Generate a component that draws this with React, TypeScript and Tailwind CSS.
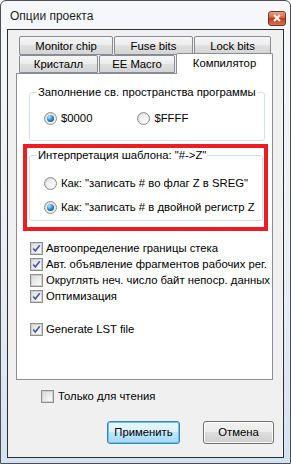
import React from "react";

function Radio({ checked }: { checked?: boolean }) {
  return (
    <span className="w-[13px] h-[13px] rounded-full border border-[#8e8f8f] bg-[linear-gradient(135deg,#cfcfcf,#f8f8f8)] flex items-center justify-center shrink-0">
      <span className="w-[9px] h-[9px] rounded-full bg-[linear-gradient(135deg,#e4e4e4,#ffffff)] flex items-center justify-center">
        {checked && (
          <span className="w-[7px] h-[7px] rounded-full bg-[radial-gradient(circle_at_35%_30%,#b8ecff,#1e7cc2_55%,#0a3f78)]" />
        )}
      </span>
    </span>
  );
}

function Check({ checked }: { checked?: boolean }) {
  return (
    <span className="w-[13px] h-[13px] border border-[#8e8f8f] bg-white flex items-center justify-center shrink-0">
      <span className="w-[11px] h-[11px] border border-[#d0d0d0] bg-[linear-gradient(135deg,#dcdcdc,#fbfbfb)] flex items-center justify-center">
        {checked && (
          <svg width="11" height="11" viewBox="0 0 11 11">
            <path d="M1.5 5.5 L4 8.5 L9.5 1.5" fill="none" stroke="#3d5a9c" strokeWidth="1.9" />
          </svg>
        )}
      </span>
    </span>
  );
}

function Tab({ label, w }: { label: string; w: string }) {
  return (
    <div
      className={`${w} h-full border border-[#898c95] rounded-t-[2px] bg-[linear-gradient(#f6f6f6,#ececec_50%,#e0e0e0_50%,#d4d4d4)] flex items-center justify-center pt-[1px]`}
    >
      {label}
    </div>
  );
}

export default function App() {
  return (
    <div
      className="w-[291px] h-[464px] border border-[#4e4e4e] rounded-t-[6px] bg-[linear-gradient(#f6f8fb,#e8eef6_60%,#d3e2f3)] flex flex-col text-black"
      style={{ fontFamily: '"Liberation Sans", Arial, sans-serif' }}
    >
      {/* title bar */}
      <div className="h-[28px] flex items-center justify-between pl-[9px] pr-[4px] pt-[2px]">
        <span className="text-[12px] text-[#1e1e1e]">Опции проекта</span>
        <div className="w-[18px] h-[15px] mt-[4px] rounded-[3px] border border-[#7b3424] bg-[linear-gradient(#e9a08a,#d3583a_50%,#c0381b_50%,#d8704e)] flex items-center justify-center">
          <svg width="8" height="8" viewBox="0 0 8 8">
            <path d="M1 1 L7 7 M7 1 L1 7" stroke="#ffffff" strokeWidth="2" />
          </svg>
        </div>
      </div>

      {/* client area */}
      <div className="mx-[6px] mb-[5px] flex-1 border border-[#2e2e2e] bg-[#f0f0f0] flex flex-col text-[11.3px] leading-[13px]">
        {/* tabs */}
        <div className="mt-[6px] ml-[8px] w-[257px] flex flex-col">
          <div className="h-[19px] pl-[3px] flex gap-[1px]">
            <Tab label="Monitor chip" w="w-[94px]" />
            <Tab label="Fuse bits" w="w-[79px]" />
            <Tab label="Lock bits" w="w-[77px]" />
          </div>
          <div className="h-[18px] pl-[3px] flex items-end gap-[1px]">
            <Tab label="Кристалл" w="w-[79px]" />
            <Tab label="EE Macro" w="w-[76px]" />
            <div className="w-[97px] h-[21px] -mb-px relative z-10 border border-b-0 border-[#898c95] rounded-t-[2px] bg-white flex justify-center pt-[3px]">
              Компилятор
            </div>
          </div>

          {/* tab page */}
          <div className="h-[307px] border border-[#898c95] bg-white flex flex-col">
            <fieldset className="mt-[12px] ml-[12px] w-[232px] h-[55px] border border-[#d5dfe5] rounded-[3px] px-[7px]">
              <legend className="px-[1px] whitespace-nowrap">Заполнение св. пространства программы</legend>
              <div className="flex items-center mt-[13px] ml-[7px]">
                <Radio checked />
                <span className="ml-[4px]">$0000</span>
                <span className="ml-[45px]">
                  <Radio />
                </span>
                <span className="ml-[4px]">$FFFF</span>
              </div>
            </fieldset>

            {/* highlighted group */}
            <div className="mt-[3px] ml-[6px] w-[245px] h-[87px] border-[4px] border-[#ee1c25] pt-[1px] pl-[2px]">
              <fieldset className="w-[232px] h-[72px] border border-[#d5dfe5] rounded-[3px] px-[7px]">
                <legend className="px-[1px] whitespace-nowrap">Интерпретация шаблона: "#-&gt;Z"</legend>
                <div className="flex flex-col gap-[11px] mt-[15px] ml-[7px]">
                  <div className="flex items-center">
                    <Radio />
                    <span className="ml-[4px] whitespace-nowrap">Как: "записать # во флаг Z в SREG"</span>
                  </div>
                  <div className="flex items-center">
                    <Radio checked />
                    <span className="ml-[4px] whitespace-nowrap">Как: "записать # в двойной регистр Z</span>
                  </div>
                </div>
              </fieldset>
            </div>

            {/* checkboxes */}
            <div className="mt-[11px] ml-[13px] flex flex-col gap-[3px]">
              {[
                ["Автоопределение границы стека", true],
                ["Авт. объявление фрагментов рабочих рег.", true],
                ["Округлять неч. число байт непоср. данных", false],
                ["Оптимизация", true],
              ].map(([label, c]) => (
                <div key={label as string} className="h-[13px] flex items-center">
                  <Check checked={c as boolean} />
                  <span className="ml-[3px] whitespace-nowrap">{label as string}</span>
                </div>
              ))}
              <div className="h-[13px] mt-[17px] flex items-center">
                <Check checked />
                <span className="ml-[3px]">Generate LST file</span>
              </div>
            </div>
          </div>
        </div>

        {/* read only */}
        <div className="mt-[10px] ml-[33px] h-[13px] flex items-center">
          <Check />
          <span className="ml-[4px]">Только для чтения</span>
        </div>

        {/* buttons */}
        <div className="mt-[18px] mr-[9px] flex justify-end gap-[23px]">
          <button className="w-[73px] h-[23px] rounded-[3px] border border-[#3c7fb1] bg-[linear-gradient(#eaf6fd,#d9f0fc_50%,#bee6fd_50%,#a7d9f5)] shadow-[inset_0_0_0_1px_#5ec8f2] flex items-center justify-center">
            Применить
          </button>
          <button className="w-[71px] h-[23px] rounded-[3px] border border-[#707070] bg-[linear-gradient(#f2f2f2,#ebebeb_50%,#dddddd_50%,#cfcfcf)] shadow-[inset_0_0_0_1px_#fcfcfc] flex items-center justify-center">
            Отмена
          </button>
        </div>
      </div>
    </div>
  );
}
